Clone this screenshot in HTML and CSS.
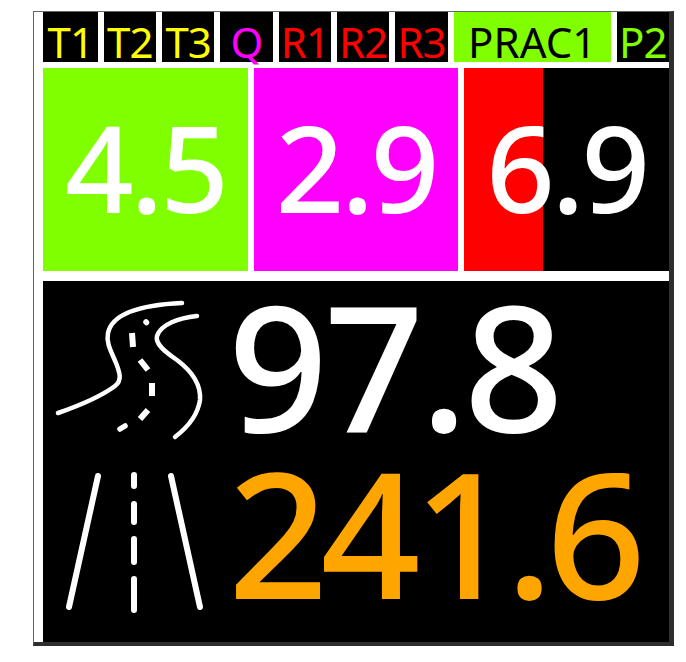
FILE: index.html
```html
<!DOCTYPE html>
<html lang="en">
<head>
  <meta charset="UTF-8">
  <title>Session Dash</title>
  <link rel="stylesheet" href="styles.css">
</head>
<body>
  <div class="frame">
    <div class="flags">
      <div class="flag wide yellow">T1</div>
      <div class="flag yellow">T2</div>
      <div class="flag yellow">T3</div>
      <div class="flag magenta">Q</div>
      <div class="flag red">R1</div>
      <div class="flag red">R2</div>
      <div class="flag red">R3</div>
      <div class="flag current">PRAC1</div>
      <div class="flag green">P2</div>
    </div>

    <div class="sectors">
      <div class="sector s-green">4.5</div>
      <div class="sector s-magenta">2.9</div>
      <div class="sector s-split">6.9</div>
    </div>

    <div class="bottom">
      <div class="icons">
        <svg class="road" width="185" height="180" viewBox="0 0 185 180">
          <g fill="none" stroke="#fff" stroke-width="4.5" stroke-linecap="round" stroke-linejoin="round">
            <path d="M15 132C38 124 60 114 72 105C80 99 76 90 73 82C68 70 63 62 65 52C69 33 95 24 139 22"/>
            <path d="M154 35C136 37 118 43 114 55C112 63 122 71 134 79C150 91 158 105 157 119C155 133 145 146 132 156"/>
            <path d="M103 41L103.5 41.5M77 148L82 145" stroke-width="5.5"/>
            <path d="M89 52L90 66M97 79L105 89M109 102L109 115M105 129L97 138" stroke-width="6" stroke-linecap="butt"/>
          </g>
        </svg>
        <svg class="road" width="185" height="180" viewBox="0 0 185 180">
          <g fill="none" stroke="#fff" stroke-width="6" stroke-linecap="round">
            <path d="M55 15L26 146M128 15L157 146"/>
            <path d="M91 14V25M91 43V61M91 78V101M91 118V149"/>
          </g>
        </svg>
      </div>
      <div class="numbers">
        <div class="big white">97.8</div>
        <div class="big orange">241.6</div>
      </div>
    </div>
  </div>
</body>
</html>
```

FILE: styles.css
```css
html, body {
  margin: 0;
  padding: 0;
  background: #fff;
}
body {
  padding: 11px 0 0 33px;
  font-family: "Noto Sans", "Open Sans", sans-serif;
}
.frame {
  width: 626px;
  height: 630px;
  padding-left: 9px;
  background: #fff;
  border-top: 1px solid #666;
  border-left: 1px solid #666;
  border-right: 5px solid #2e2e2e;
  border-bottom: 4px solid #2e2e2e;
}

.flags {
  display: flex;
  gap: 6px;
  height: 50px;
}
.flag {
  width: 52.4px;
  height: 50px;
  box-sizing: border-box;
  padding-top: 10px;
  background: #000;
  text-align: center;
  font-size: 42px;
  line-height: 40px;
  letter-spacing: -1px;
}
.flag.wide { width: 54.6px; }
.flag.current {
  width: 157px;
  background: #7fff00;
  color: #000;
  letter-spacing: 0;
}
.yellow { color: #ff0; }
.magenta { color: #f0f; }
.red { color: #f00; }
.green { color: #7fff00; }

.sectors {
  display: flex;
  gap: 6px;
  margin-top: 6px;
  height: 203px;
}
.sector {
  flex: 1;
  color: #fff;
  font-size: 120px;
  font-weight: 500;
  line-height: 197px;
  letter-spacing: -3px;
  text-align: center;
}
.s-green { background: #7fff00; }
.s-magenta { background: #f0f; }
.s-split { background: linear-gradient(to right, #f00 79.4px, #000 79.4px); }

.bottom {
  display: flex;
  margin-top: 10px;
  height: 361px;
  background: #000;
}
.icons {
  flex: none;
  width: 185px;
}
.road {
  display: block;
}
.big {
  font-size: 175px;
  font-weight: 500;
  line-height: 167px;
}
.white {
  color: #fff;
  letter-spacing: -4px;
}
.orange {
  color: #ffa500;
  letter-spacing: -7.5px;
}
```
